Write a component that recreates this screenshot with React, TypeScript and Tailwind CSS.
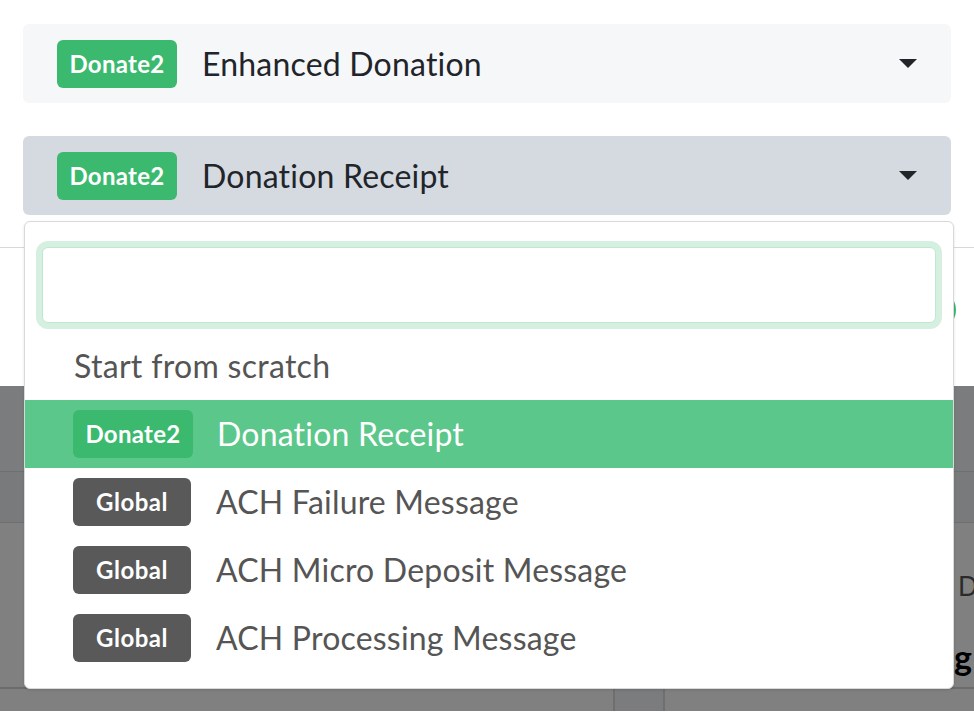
const font = "font-['Lato','Noto_Sans',sans-serif]";

function Caret() {
  return (
    <svg width="18" height="10" viewBox="0 0 18 10" className="shrink-0">
      <path d="M0 0 H18 L9 9 Z" fill="#212529" />
    </svg>
  );
}

function Badge({ label, tone }: { label: string; tone: "green" | "gray" }) {
  return (
    <span
      className={
        tone === "green"
          ? "flex h-[48px] w-[120px] shrink-0 items-center justify-center rounded-md bg-[#3bb96f] text-[24px] font-bold tracking-[0.3px] text-white"
          : "flex h-[48px] w-[118px] shrink-0 items-center justify-center rounded-md bg-[#595959] text-[24px] font-bold tracking-[0.5px] text-white"
      }
    >
      {label}
    </span>
  );
}

function Picker({ label, active }: { label: string; active?: boolean }) {
  return (
    <div
      className={
        active
          ? "flex h-[79px] items-center rounded-md bg-[#d5dae1] pl-[34px] pr-[34px]"
          : "flex h-[79px] items-center rounded-md bg-[#f6f7f9] pl-[34px] pr-[34px]"
      }
    >
      <Badge label="Donate2" tone="green" />
      <span className="ml-[25px] flex-1 text-[32px] tracking-[0.2px] text-[#212529]">{label}</span>
      <Caret />
    </div>
  );
}

const rows = [
  { badge: "Donate2", label: "Donation Receipt", selected: true },
  { badge: "Global", label: "ACH Failure Message" },
  { badge: "Global", label: "ACH Micro Deposit Message" },
  { badge: "Global", label: "ACH Processing Message" },
];

export default function App() {
  return (
    <div className={`relative h-[712px] w-[974px] overflow-hidden bg-white ${font}`}>
      <div className="flex flex-col gap-[33px] px-[23px] pt-[24px]">
        <Picker label="Enhanced Donation" />
        <Picker label="Donation Receipt" active />
      </div>

      {/* page behind the menu */}
      <div className="mt-[32px] border-t border-[#d5d9de]" />
      <div className="relative h-[138px]">
        <div className="absolute left-[916px] top-[42px] h-[40px] w-[40px] rounded-full bg-[#3bb96f]" />
      </div>
      <div className="flex h-[325px] flex-col bg-[#808080]">
        <div className="h-[86px] border-b border-[#6e6f71] bg-[#7b7c7e]" />
        <div className="h-[51px] border-b border-[#6e6f71] bg-[#797a7c]" />
        <div className="relative flex-1">
          <span className="absolute left-[958px] top-[50px] text-[26px] leading-none text-[#2a2a2a]">D</span>
          <span className="absolute left-[954px] top-[108px] text-[34px] font-bold text-black">g</span>
        </div>
        <div className="flex h-[24px] border-t-2 border-[#6b6b6b]">
          <div className="w-[615px] border-r-2 border-[#6e6f71]" />
          <div className="w-[50px] border-r-2 border-[#6e6f71] bg-[#7b7c7e]" />
          <div className="flex-1" />
        </div>
      </div>

      {/* dropdown menu */}
      <div className="absolute left-[24px] top-[221px] flex h-[468px] w-[930px] flex-col rounded-md border border-[#d9d9d9] bg-white shadow-sm">
        <div className="mx-[17px] mt-[25px] h-[76px] rounded-md border border-[#bfe8d0] bg-white ring-[6px] ring-[#d5f0e1]" />
        <div className="mt-[9px] flex h-[68px] items-center pl-[49px] text-[32px] tracking-[0.3px] text-[#555]">
          Start from scratch
        </div>
        {rows.map((r) => (
          <div
            key={r.label}
            className={
              r.selected
                ? "flex h-[68px] items-center bg-[#5bc78a] pl-[48px] text-[32px] tracking-[0.2px] text-white"
                : "flex h-[68px] items-center pl-[48px] text-[32px] tracking-[0.2px] text-[#555]"
            }
          >
            <Badge label={r.badge} tone={r.badge === "Global" ? "gray" : "green"} />
            <span className={r.badge === "Global" ? "ml-[25px]" : "ml-[24px]"}>{r.label}</span>
          </div>
        ))}
      </div>
    </div>
  );
}
